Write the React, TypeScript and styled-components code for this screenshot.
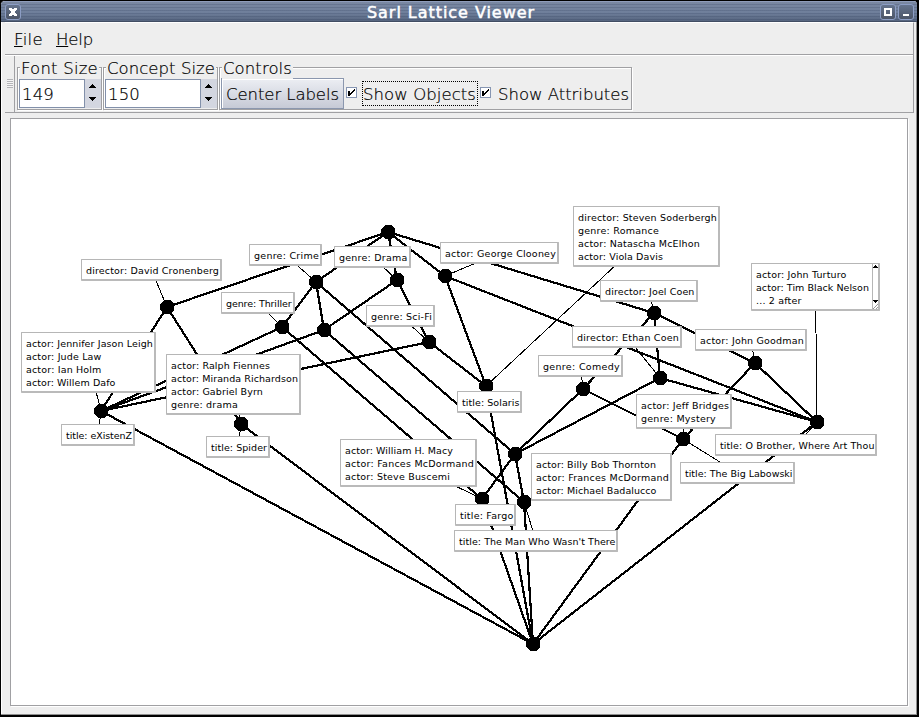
import React, { useLayoutEffect, useRef, useState } from "react";
import styled, { createGlobalStyle } from "styled-components";

const GlobalStyle = createGlobalStyle`
  * { box-sizing: border-box; }
  html, body { margin: 0; padding: 0; overflow: hidden; background: #000; }
  body { font-family: "DejaVu Sans", sans-serif; color: #000; }
`;

const Window = styled.div`
  width: 919px;
  height: 717px;
  display: flex;
  flex-direction: column;
  background: #eeeeee;
  border: 1px solid #000;
  border-right-width: 2px;
  border-bottom-width: 2px;
  border-radius: 5px 5px 0 0;
  box-shadow: inset -1px -1px 0 #8f8f8f, inset 1px 0 0 #fff;
  overflow: hidden;
`;

const TitleBar = styled.header`
  flex: none;
  height: 21px;
  display: flex;
  align-items: center;
  padding: 1px 3px 0 4px;
  border-top: 1px solid #8f9dbb;
  border-bottom: 1px solid #414d63;
  background:
    repeating-linear-gradient(180deg, transparent 0 2px, rgba(40, 55, 85, 0.2) 2px 3px),
    linear-gradient(180deg, #7a88a2 0, #6f7f9b 55%, #56657f 100%);
`;

const TitleText = styled.div`
  flex: 1;
  display: flex;
  justify-content: center;
  padding-left: 1px;
  font-size: 16px;
  line-height: 19px;
  color: #fff;
  -webkit-text-stroke: 0.5px #fff;
`;

const TitleButton = styled.div<{ $gap?: number }>`
  flex: none;
  width: 16px;
  height: 16px;
  margin-left: ${(p) => p.$gap ?? 0}px;
  border: 1px solid #8c9dc4;
  border-radius: 3px;
  background: linear-gradient(#65748e, #4c5567);
  svg { display: block; }
`;

const Body = styled.div`
  flex: 1;
  display: flex;
  flex-direction: column;
  padding: 0 3px 0 4px;
`;

const Bars = styled.div`
  width: 909px;
  flex: none;
  border-right: 1px solid #9d9da1;
  border-top: 1px solid #fff;
`;

const MenuBar = styled.nav`
  height: 32px;
  display: flex;
  gap: 13px;
  padding: 6px 0 0 9px;
  border-bottom: 1px solid #a0a0a3;
  font-size: 16.5px;
  font-weight: 200;
  line-height: 22px;
  -webkit-text-stroke: 0.2px #000;
`;

const MenuItem = styled.span`
  display: block;
`;

const Mnemonic = styled.span`
  text-decoration: underline;
  text-decoration-thickness: 1px;
  text-underline-offset: 1px;
`;

const ToolBar = styled.div`
  height: 58px;
  display: flex;
  border-top: 1px solid #fff;
  border-bottom: 1px solid #a0a0a3;
  font-size: 16.5px;
  font-weight: 200;
  -webkit-text-stroke: 0.2px #000;
`;

const Grip = styled.div`
  width: 10px;
  border-right: 1px solid #a0a0a3;
  display: flex;
  align-items: flex-start;
  padding: 23px 0 0 2px;
  &::before {
    content: "";
    width: 6px;
    height: 9px;
    background: repeating-linear-gradient(180deg, #b4b4b8 0 1px, #f6f6f6 1px 2px);
  }
`;

const Group = styled.section<{ $w: number; $left: number }>`
  position: relative;
  flex: none;
  width: ${(p) => p.$w}px;
  height: 43px;
  margin: 11px 0 0 ${(p) => p.$left}px;
  padding: 11px 0 0 1px;
  border: 1px solid #a0a0a3;
  box-shadow: 1px 1px 0 #fff, inset 1px 1px 0 #fff;
  display: flex;
  align-items: flex-start;
`;

const Legend = styled.span`
  position: absolute;
  left: 2px;
  top: -9px;
  padding: 0 1px 0 1px;
  line-height: 20px;
  background: #eeeeee;
`;

const SpinField = styled.div<{ $w: number }>`
  width: ${(p) => p.$w}px;
  height: 29px;
  padding: 0 0 0 2px;
  border: 1px solid #8290aa;
  background: #fff;
  line-height: 29px;
`;

const SpinButtons = styled.div`
  flex: 1;
  height: 29px;
  background: #d3d6e0;
  svg { display: block; }
`;

const PushButton = styled.div`
  width: 123px;
  height: 31px;
  margin-top: -1px;
  padding-left: 4px;
  border: 1px solid #8b97ae;
  box-shadow: inset 1px 1px 0 #fff;
  background: linear-gradient(#eceef3, #c6cad6);
  line-height: 31px;
`;

const CheckBox = styled.div<{ $left: number }>`
  width: 11px;
  height: 11px;
  margin: 8px 0 0 ${(p) => p.$left}px;
  border: 1px solid #8796b2;
  background: #fff;
  svg { display: block; }
`;

const CheckText = styled.div<{ $focused?: boolean }>`
  height: 25px;
  margin: 2px 0 0 ${(p) => (p.$focused ? 5 : 6)}px;
  width: ${(p) => (p.$focused ? 116 : 134)}px;
  border: 1px ${(p) => (p.$focused ? "dotted #000" : "solid transparent")};
  line-height: 25px;
`;

const Canvas = styled.main`
  position: relative;
  width: 898px;
  height: 588px;
  margin: 5px 0 0 5px;
  border: 1px solid #a0a0a3;
  box-shadow: 1px 1px 0 #fff;
  background: #fff;
  > svg { display: block; }
`;

const Label = styled.div<{ $x: number; $y: number; $w: number }>`
  position: absolute;
  left: ${(p) => p.$x - 11}px;
  top: ${(p) => p.$y - 119}px;
  width: ${(p) => p.$w}px;
  padding: 4px 0 2px 4px;
  background: #fff;
  border: 1px solid #b6b6b6;
  border-right: 2px solid #bababa;
  border-bottom: 2px solid #bababa;
  border-radius: 1px;
  font-size: 9.5px;
  line-height: 13px;
`;

const ScrollStrip = styled.div`
  position: absolute;
  top: 0;
  right: 0;
  width: 6px;
  height: 45px;
  border-left: 1px solid #b6b6b6;
  background: #fff;
  svg { display: block; }
`;

const Line = styled.div`
  height: 13px;
  white-space: pre;
`;

const Run = styled.span`
  display: inline-block;
  white-space: pre;
`;

/** Text tracked so that it occupies a given width; the first letter can be a mnemonic. */
function Fit({ text, width, mnemonic }: { text: string; width: number; mnemonic?: boolean }) {
  const ref = useRef<HTMLSpanElement>(null);
  const [tracking, setTracking] = useState(0);
  useLayoutEffect(() => {
    if (ref.current) {
      const natural = ref.current.getBoundingClientRect().width;
      setTracking((width + 1 - natural) / text.length);
    }
  }, [text, width]);
  return (
    <Run ref={ref} style={{ letterSpacing: `${tracking}px` }}>
      {mnemonic ? <><Mnemonic>{text[0]}</Mnemonic>{text.slice(1)}</> : text}
    </Run>
  );
}

const nodes: Record<string, [number, number]> = {
  top: [388, 232], crime: [316, 282], drama: [397, 280], clooney: [445, 276],
  cronenberg: [167, 307], thriller: [282, 327], crimeDrama: [324, 330], scifi: [429, 342],
  solaris: [486, 386], joel: [654, 313], goodman: [755, 363], ethan: [660, 378],
  comedy: [583, 389], brother: [817, 422], labowski: [683, 439], existenz: [101, 411],
  spider: [241, 424], coens: [515, 454], fargo: [482, 499], man: [524, 502], bottom: [533, 644],
};

const edges: [string, string][] = [
  ["top", "cronenberg"], ["top", "crime"], ["top", "drama"], ["top", "clooney"], ["top", "joel"],
  ["crime", "thriller"], ["crime", "crimeDrama"], ["crime", "coens"],
  ["drama", "crimeDrama"], ["drama", "scifi"],
  ["clooney", "solaris"], ["clooney", "brother"],
  ["cronenberg", "existenz"], ["cronenberg", "spider"],
  ["thriller", "existenz"], ["thriller", "fargo"],
  ["crimeDrama", "existenz"], ["crimeDrama", "man"],
  ["scifi", "existenz"], ["scifi", "solaris"],
  ["joel", "comedy"], ["joel", "ethan"], ["joel", "goodman"],
  ["goodman", "labowski"], ["goodman", "brother"],
  ["ethan", "brother"], ["ethan", "coens"],
  ["comedy", "coens"], ["comedy", "labowski"],
  ["coens", "fargo"], ["coens", "man"],
  ["fargo", "bottom"], ["solaris", "bottom"], ["man", "bottom"], ["labowski", "bottom"],
  ["brother", "bottom"], ["existenz", "bottom"], ["spider", "bottom"],
];

type LabelData = { node: string; x: number; y: number; w: number; scroll?: boolean; lines: [string, number][] };

const labels: LabelData[] = [
  { node: "cronenberg", x: 81, y: 259, w: 141, lines: [["director: David Cronenberg", 132]] },
  { node: "crime", x: 249, y: 244, w: 73, lines: [["genre: Crime", 64]] },
  { node: "drama", x: 334, y: 246, w: 77, lines: [["genre: Drama", 67.5]] },
  { node: "thriller", x: 221, y: 292, w: 74, lines: [["genre: Thriller", 64.5]] },
  { node: "scifi", x: 366, y: 305, w: 69, lines: [["genre: Sci-Fi", 60]] },
  { node: "existenz", x: 21, y: 332, w: 135, lines: [["actor: Jennifer Jason Leigh", 126], ["actor: Jude Law", 74.5], ["actor: Ian Holm", 74.5], ["actor: Willem Dafo", 88.5]] },
  { node: "spider", x: 166, y: 354, w: 135, lines: [["actor: Ralph Fiennes", 98], ["actor: Miranda Richardson", 126], ["actor: Gabriel Byrn", 91], ["genre: drama", 66]] },
  { node: "existenz", x: 61, y: 424, w: 74, lines: [["title: eXistenZ", 65]] },
  { node: "spider", x: 206, y: 436, w: 64, lines: [["title: Spider", 55]] },
  { node: "clooney", x: 440, y: 242, w: 119, lines: [["actor: George Clooney", 110]] },
  { node: "solaris", x: 573, y: 206, w: 147, lines: [["director: Steven Soderbergh", 138], ["genre: Romance", 80], ["actor: Natascha McElhon", 121], ["actor: Viola Davis", 84]] },
  { node: "joel", x: 600, y: 280, w: 98, lines: [["director: Joel Coen", 88.5]] },
  { node: "ethan", x: 572, y: 326, w: 110, lines: [["director: Ethan Coen", 101]] },
  { node: "comedy", x: 538, y: 355, w: 85, lines: [["genre: Comedy", 76]] },
  { node: "solaris", x: 457, y: 391, w: 65, lines: [["title: Solaris", 56.5]] },
  { node: "goodman", x: 695, y: 329, w: 112, lines: [["actor: John Goodman", 103]] },
  { node: "brother", x: 751, y: 263, w: 129, scroll: true, lines: [["actor: John Turturo", 89.5], ["actor: Tim Black Nelson", 112], ["... 2 after", 44.5]] },
  { node: "labowski", x: 636, y: 394, w: 96, lines: [["actor: Jeff Bridges", 87], ["genre: Mystery", 74]] },
  { node: "brother", x: 715, y: 434, w: 162, lines: [["title: O Brother, Where Art Thou", 153.5]] },
  { node: "labowski", x: 680, y: 462, w: 115, lines: [["title: The Big Labowski", 106.5]] },
  { node: "fargo", x: 340, y: 439, w: 137, lines: [["actor: William H. Macy", 107], ["actor: Fances McDormand", 128], ["actor: Steve Buscemi", 104]] },
  { node: "man", x: 531, y: 453, w: 141, lines: [["actor: Billy Bob Thornton", 119], ["actor: Frances McDormand", 132], ["actor: Michael Badalucco", 119.5]] },
  { node: "fargo", x: 455, y: 504, w: 61, lines: [["title: Fargo", 52.5]] },
  { node: "man", x: 454, y: 530, w: 164, lines: [["title: The Man Who Wasn't There", 155.5]] },
];

const labelCentre = (l: LabelData): [number, number] => [l.x + l.w / 2, l.y + (9 + 13 * l.lines.length) / 2];

const NODE_OUTLINE = "M-3 -7H3L7 -3V3L3 7H-3L-7 3V-3Z";

function Diagram() {
  return (
    <svg width="896" height="586" viewBox="11 119 896 586" shapeRendering="crispEdges">
      <g stroke="#000" strokeWidth="2.2">
        {edges.map(([a, b]) => (
          <line key={a + b} x1={nodes[a][0]} y1={nodes[a][1]} x2={nodes[b][0]} y2={nodes[b][1]} />
        ))}
      </g>
      <g stroke="#000" strokeWidth="1">
        {labels.map((l, i) => {
          const [cx, cy] = labelCentre(l);
          return <line key={i} x1={cx} y1={cy} x2={nodes[l.node][0]} y2={nodes[l.node][1]} />;
        })}
      </g>
      {Object.entries(nodes).map(([k, [x, y]]) => (
        <path key={k} d={NODE_OUTLINE} transform={`translate(${x} ${y})`} />
      ))}
    </svg>
  );
}

function SpinArrows() {
  return (
    <SpinButtons>
      <svg width="16" height="29" shapeRendering="crispEdges">
        <path d="M4 9h7v-1h-1v-1h-1v-1h-1v-1h-1v1h-1v1h-1v1h-1z M4 18h7v1h-1v1h-1v1h-1v1h-1v-1h-1v-1h-1v-1h-1z" />
      </svg>
    </SpinButtons>
  );
}

function Check({ left }: { left: number }) {
  return (
    <CheckBox $left={left}>
      <svg width="9" height="9" shapeRendering="crispEdges">
        <path d="M1 3h2v2h1v-1h1v-1h1v-1h1v-1h1v2h-1v1h-1v1h-1v1h-1v1h-1v1h-2z" />
      </svg>
    </CheckBox>
  );
}

export default function App() {
  return (
    <>
      <GlobalStyle />
      <Window>
        <TitleBar>
          <TitleButton>
            <svg width="14" height="14" shapeRendering="crispEdges">
              <path fill="#fff" d="M3 3h3v1h2v-1h3v2h-1v1h-1v2h1v1h1v2h-3v-1h-2v1h-3v-2h1v-1h1v-2h-1v-1h-1z" />
            </svg>
          </TitleButton>
          <TitleText><Fit text="Sarl Lattice Viewer" width={167} /></TitleText>
          <TitleButton>
            <svg width="14" height="14" shapeRendering="crispEdges">
              <rect x="4" y="4" width="6" height="6" fill="none" stroke="#fff" strokeWidth="2" />
            </svg>
          </TitleButton>
          <TitleButton $gap={2}>
            <svg width="14" height="14" shapeRendering="crispEdges">
              <rect x="4" y="9" width="6" height="2" fill="#fff" />
            </svg>
          </TitleButton>
        </TitleBar>
        <Body>
          <Bars>
            <MenuBar>
              <MenuItem><Fit text="File" width={28} mnemonic /></MenuItem>
              <MenuItem><Fit text="Help" width={36} mnemonic /></MenuItem>
            </MenuBar>
            <ToolBar>
              <Grip />
              <Group $w={85} $left={2}>
                <Legend><Fit text="Font Size" width={76} /></Legend>
                <SpinField $w={66}><Fit text="149" width={31} /></SpinField>
                <SpinArrows />
              </Group>
              <Group $w={115} $left={1}>
                <Legend><Fit text="Concept Size" width={107} /></Legend>
                <SpinField $w={97}><Fit text="150" width={31} /></SpinField>
                <SpinArrows />
              </Group>
              <Group $w={413} $left={1}>
                <Legend><Fit text="Controls" width={68} /></Legend>
                <PushButton><Fit text="Center Labels" width={112} /></PushButton>
                <Check left={2} />
                <CheckText $focused><Fit text="Show Objects" width={112} /></CheckText>
                <Check left={2} />
                <CheckText><Fit text="Show Attributes" width={130} /></CheckText>
              </Group>
            </ToolBar>
          </Bars>
          <Canvas>
            <Diagram />
            {labels.map((l, i) => (
              <Label key={i} $x={l.x} $y={l.y} $w={l.w}>
                {l.lines.map(([text, width]) => (
                  <Line key={text}><Fit text={text} width={width} /></Line>
                ))}
                {l.scroll && (
                  <ScrollStrip>
                    <svg width="5" height="45" shapeRendering="crispEdges">
                      <path d="M2 1h1v1h1v1h1v1h-5v-1h1v-1h1z M0 36h5v1h-1v1h-1v1h-1v-1h-1v-1h-1z" />
                      <path d="M0 45L5 40M3 45L5 43" stroke="#999" shapeRendering="auto" />
                    </svg>
                  </ScrollStrip>
                )}
              </Label>
            ))}
          </Canvas>
        </Body>
      </Window>
    </>
  );
}
